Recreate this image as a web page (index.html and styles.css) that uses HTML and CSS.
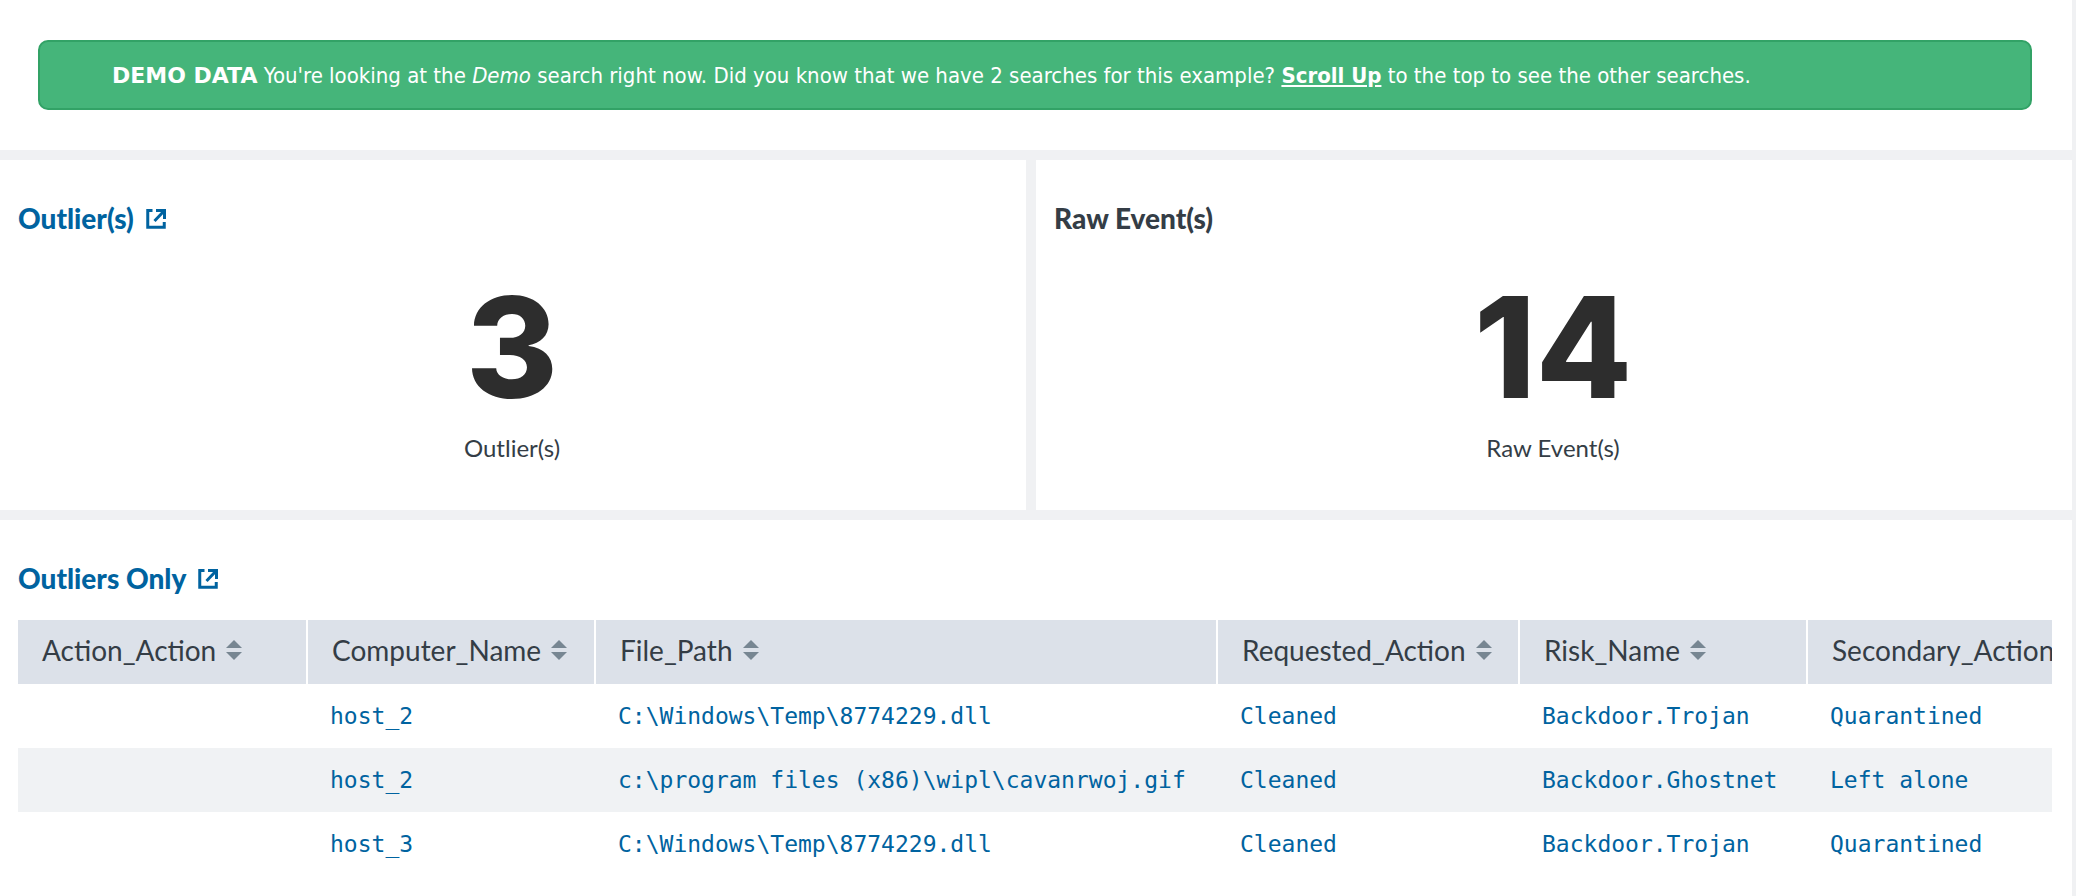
FILE: index.html
```html
<!DOCTYPE html>
<html lang="en">
<head>
<meta charset="utf-8">
<title>Outliers dashboard</title>
<link rel="stylesheet" href="styles.css">
</head>
<body>
<main class="dashboard">
  <section class="panel banner-panel">
    <p class="banner"><strong class="banner-label">DEMO DATA</strong> You're looking at the <em>Demo</em> search right now. Did you know that we have 2 searches for this example? <a class="banner-link" href="#top">Scroll Up</a> to the top to see the other searches.</p>
  </section>
  <div class="row">
    <section class="panel">
      <h2 class="title"><a class="title-link" href="#outliers">Outlier(s)
        <svg class="external" viewBox="0 0 20 20" aria-hidden="true"><path d="M6.500 1.500H1.750v16.750h16.500V13M10 1.500h8.500V10M18 2L8.500 12"/></svg></a></h2>
      <div class="single"><span class="value">3</span><span class="caption">Outlier(s)</span></div>
    </section>
    <section class="panel">
      <h2 class="title">Raw Event(s)</h2>
      <div class="single"><span class="value">14</span><span class="caption">Raw Event(s)</span></div>
    </section>
  </div>
  <section class="panel table-panel" id="outliers">
    <h2 class="title"><a class="title-link" href="#outliers">Outliers Only
      <svg class="external" viewBox="0 0 20 20" aria-hidden="true"><path d="M6.500 1.500H1.750v16.750h16.500V13M10 1.500h8.500V10M18 2L8.500 12"/></svg></a></h2>
    <div class="table-scroll">
      <table class="results">
        <colgroup><col class="c-action"><col class="c-name"><col class="c-path"><col class="c-requested"><col class="c-name"><col class="c-secondary"></colgroup>
        <thead>
          <tr>
            <th><button class="sort">Action_Action<svg class="arrows" viewBox="0 0 16 20" aria-hidden="true"><path d="M8 0l8 8H0zM0 12h16l-8 8z"/></svg></button></th>
            <th><button class="sort">Computer_Name<svg class="arrows" viewBox="0 0 16 20" aria-hidden="true"><path d="M8 0l8 8H0zM0 12h16l-8 8z"/></svg></button></th>
            <th><button class="sort">File_Path<svg class="arrows" viewBox="0 0 16 20" aria-hidden="true"><path d="M8 0l8 8H0zM0 12h16l-8 8z"/></svg></button></th>
            <th><button class="sort">Requested_Action<svg class="arrows" viewBox="0 0 16 20" aria-hidden="true"><path d="M8 0l8 8H0zM0 12h16l-8 8z"/></svg></button></th>
            <th><button class="sort">Risk_Name<svg class="arrows" viewBox="0 0 16 20" aria-hidden="true"><path d="M8 0l8 8H0zM0 12h16l-8 8z"/></svg></button></th>
            <th><button class="sort">Secondary_Action<svg class="arrows" viewBox="0 0 16 20" aria-hidden="true"><path d="M8 0l8 8H0zM0 12h16l-8 8z"/></svg></button></th>
          </tr>
        </thead>
        <tbody>
          <tr><td></td><td>host_2</td><td>C:\Windows\Temp\8774229.dll</td><td>Cleaned</td><td>Backdoor.Trojan</td><td>Quarantined</td></tr>
          <tr><td></td><td>host_2</td><td>c:\program files (x86)\wipl\cavanrwoj.gif</td><td>Cleaned</td><td>Backdoor.Ghostnet</td><td>Left alone</td></tr>
          <tr><td></td><td>host_3</td><td>C:\Windows\Temp\8774229.dll</td><td>Cleaned</td><td>Backdoor.Trojan</td><td>Quarantined</td></tr>
        </tbody>
      </table>
    </div>
  </section>
</main>
</body>
</html>
```

FILE: styles.css
```css
* { box-sizing: border-box; }

body {
  margin: 0;
  background: #f0f1f3;
  color: #343d46;
  font-family: Lato, "Liberation Sans", sans-serif;
}

.dashboard {
  display: flex;
  flex-direction: column;
  gap: 10px;
  min-height: 100vh;
  padding-right: 4px;
}

.row {
  display: grid;
  grid-template-columns: 1026fr 1036fr;
  gap: 10px;
}

.panel {
  min-width: 0;
  padding: 39px 20px 46px 18px;
  background: #fff;
}

.banner-panel { padding: 40px; padding-left: 38px; }

.banner {
  margin: 0;
  padding: 18px 72px 16px;
  border: 2px solid #32a266;
  border-radius: 10px;
  background: #45b57a;
  color: #fff;
  font: 22px/32px "DejaVu Sans Condensed", "Open Sans", sans-serif;
}

.banner-label { font: bold 22px/1 "DejaVu Sans", sans-serif; }

.banner-link { color: inherit; font-weight: bold; }

.title {
  margin: 0;
  font-size: 28px;
  line-height: 38px;
  font-weight: 900;
}

.title-link { color: #0063a0; text-decoration: none; }

.external {
  width: 20px;
  height: 20px;
  margin-left: 6px;
  fill: none;
  stroke: currentColor;
  stroke-width: 3;
}

.single {
  display: flex;
  flex-direction: column;
  align-items: center;
  padding-top: 35px;
}

.value {
  color: #2d2d2d;
  font: 800 140px/150px Inter, sans-serif;
}

.caption { padding-top: 10px; font-size: 24px; line-height: 32px; }

.table-panel { flex: 1; padding-bottom: 20px; }

.table-scroll { margin-top: 23px; overflow: hidden; }

.results {
  width: 100%;
  border-collapse: separate;
  border-spacing: 0;
  table-layout: fixed;
}

.c-action { width: 290px; }
.c-name { width: 288px; }
.c-path { width: 622px; }
.c-requested { width: 302px; }

.results th {
  height: 64px;
  padding: 0 0 4px 24px;
  border-right: 2px solid #fff;
  background: #dce1e9;
  text-align: left;
}

.results th:last-child { border-right: 0; }

.sort {
  display: flex;
  align-items: center;
  gap: 10px;
  padding: 0;
  border: 0;
  background: none;
  color: inherit;
  font: 28px/36px Lato, "Liberation Sans", sans-serif;
  white-space: nowrap;
}

.arrows { flex: none; width: 16px; height: 20px; fill: #778692; }

.results td {
  height: 64px;
  padding: 0 0 0 22px;
  color: #0063a0;
  font: 23px/32px "DejaVu Sans Mono", monospace;
  white-space: nowrap;
}

.results tbody tr:nth-child(even) { background: #f0f2f4; }
```
